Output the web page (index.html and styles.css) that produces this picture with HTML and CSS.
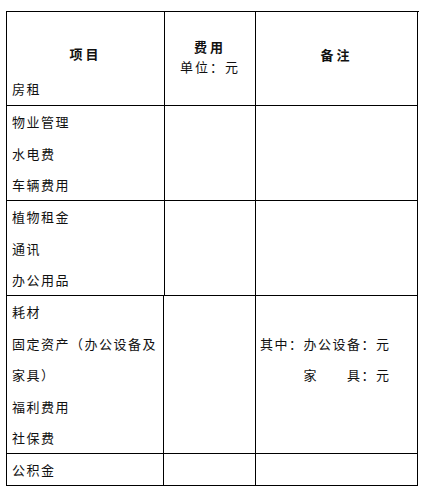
FILE: index.html
```html
<!DOCTYPE html>
<html lang="zh-CN">
<head>
<meta charset="utf-8">
<title>费用表</title>
<link rel="stylesheet" href="styles.css">
</head>
<body>
<div class="sheet">
  <div class="row head">
    <div class="cell c-item">
      <div class="h-title">项目</div>
      <div class="h-sub">房租</div>
    </div>
    <div class="cell c-fee">
      <div class="h-title">费用</div>
      <div class="h-unit">单位：元</div>
    </div>
    <div class="cell c-note">
      <div class="h-title">备注</div>
    </div>
  </div>
  <div class="row r3">
    <div class="cell list">
      <div class="line">物业管理</div>
      <div class="line">水电费</div>
      <div class="line">车辆费用</div>
    </div>
    <div class="cell"></div>
    <div class="cell"></div>
  </div>
  <div class="row r3">
    <div class="cell list">
      <div class="line">植物租金</div>
      <div class="line">通讯</div>
      <div class="line">办公用品</div>
    </div>
    <div class="cell"></div>
    <div class="cell"></div>
  </div>
  <div class="row r5 shift">
    <div class="cell list">
      <div class="line">耗材</div>
      <div class="line">固定资产（办公设备及</div>
      <div class="line">家具）</div>
      <div class="line">福利费用</div>
      <div class="line">社保费</div>
    </div>
    <div class="cell"></div>
    <div class="cell list note">
      <div class="line"></div>
      <div class="line">其中：办公设备：元</div>
      <div class="line">　　　家　　具：元</div>
    </div>
  </div>
  <div class="row r1 shift">
    <div class="cell list">
      <div class="line">公积金</div>
    </div>
    <div class="cell"></div>
    <div class="cell"></div>
  </div>
</div>
</body>
</html>
```
FILE: styles.css
```css
html, body {
  margin: 0;
  padding: 0;
  background: #fff;
}

body {
  font-family: "Noto Sans CJK SC", "Noto Sans", sans-serif;
  font-size: 13px;
  color: #111;
}

.sheet {
  margin: 11px 0 0 6px;
  width: 412px;
  border-top: 1px solid #000;
  border-left: 1px solid #000;
}

.row {
  display: grid;
  grid-template-columns: 158px 91px 162px;
}

.row.shift {
  grid-template-columns: 157px 92px 162px;
}

.head { height: 94px; }
.r3 { height: 95px; }
.r5 { height: 158px; }
.r1 { height: 32px; }

.cell {
  box-sizing: border-box;
  border-right: 1px solid #000;
  border-bottom: 1px solid #000;
  overflow: hidden;
}

.h-title {
  font-weight: bold;
  letter-spacing: 3px;
  line-height: 18px;
  text-align: center;
}

.c-item .h-title {
  margin-top: 33px;
}

.h-sub {
  margin-top: 17px;
  padding-left: 5px;
  line-height: 18px;
  letter-spacing: 1.5px;
}

.c-fee {
  padding-top: 25px;
  text-align: center;
}

.c-fee .h-title,
.h-unit {
  line-height: 19.5px;
}

.h-unit {
  letter-spacing: 2px;
}

.c-note {
  padding-top: 34px;
}

.list {
  padding-left: 5px;
}

.list.note {
  padding-left: 4px;
}

.line {
  height: 31.5px;
  line-height: 31.5px;
  letter-spacing: 1.5px;
  white-space: nowrap;
}
```
